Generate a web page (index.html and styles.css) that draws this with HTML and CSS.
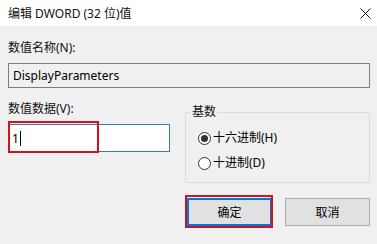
FILE: index.html
```html
<!DOCTYPE html>
<html lang="zh-CN">
<head>
<meta charset="utf-8">
<title>编辑 DWORD (32 位)值</title>
<link rel="stylesheet" href="styles.css">
</head>
<body>
<div class="dialog">
  <div class="titlebar">
    <span class="title">编辑 DWORD (32 位)值</span>
    <svg class="close" width="11" height="11" viewBox="0 0 11 11"><path d="M0.5 0.5 L10.5 10.5 M10.5 0.5 L0.5 10.5" stroke="#111" stroke-width="1" fill="none"/></svg>
  </div>
  <div class="content">
    <div class="label">数值名称(N):</div>
    <div class="name-field">DisplayParameters</div>
    <div class="row">
      <div class="left-col">
        <div class="label">数值数据(V):</div>
        <div class="value-wrap">
          <div class="value-field"><span>1</span><span class="caret"></span></div>
          <div class="highlight hl-value"></div>
        </div>
      </div>
      <fieldset class="group">
        <legend>基数</legend>
        <div class="radio-row"><span class="radio checked"></span><span>十六进制(H)</span></div>
        <div class="radio-row second"><span class="radio"></span><span>十进制(D)</span></div>
      </fieldset>
    </div>
    <div class="buttons">
      <div class="btn-wrap">
        <div class="btn default">确定</div>
        <div class="highlight hl-ok"></div>
      </div>
      <div class="btn">取消</div>
    </div>
  </div>
</div>
</body>
</html>
```
FILE: styles.css
```css
html, body {
  margin: 0;
  padding: 0;
}
body {
  font-family: "Noto Sans", "Noto Sans CJK SC", sans-serif;
  font-size: 12px;
  color: #000;
  background: #f0f0f0;
}
.dialog {
  width: 377px;
  height: 244px;
  overflow: hidden;
  background: #f0f0f0;
  display: flex;
  flex-direction: column;
}
.titlebar {
  height: 26px;
  flex: none;
  background: #fff;
  display: flex;
  align-items: center;
  justify-content: space-between;
  padding: 0 6px 0 8px;
}
.title {
  color: #111;
}
.close {
  display: block;
}
.content {
  padding: 14px 7px 0 8px;
}
.label {
  height: 16px;
  line-height: 16px;
  color: #111;
}
.name-field {
  margin-top: 7px;
  height: 25px;
  box-sizing: border-box;
  border: 1px solid #7e7e7e;
  background: #f0f0f0;
  padding-left: 4px;
  line-height: 23px;
}
.row {
  display: flex;
  margin-top: 13px;
}
.left-col {
  width: 162px;
}
.value-wrap {
  position: relative;
  margin-top: 7px;
}
.value-field {
  height: 28px;
  box-sizing: border-box;
  border: 1px solid #3a78b4;
  background: #fff;
  padding-left: 3px;
  display: flex;
  align-items: center;
}
.caret {
  width: 1px;
  height: 15px;
  background: #000;
  margin-left: 1px;
}
.highlight {
  position: absolute;
  border: 2px solid #d4111f;
  box-sizing: border-box;
}
.hl-value {
  left: 0;
  top: -3px;
  width: 91px;
  height: 32px;
}
.group {
  margin: 3px 0 0 auto;
  width: 185px;
  box-sizing: border-box;
  border: 1px solid #dcdcdc;
  border-radius: 2px;
  padding: 10px 0 11px 5px;
}
.group legend {
  padding: 0 1px;
  line-height: 16px;
  color: #111;
}
.radio-row {
  display: flex;
  align-items: center;
  gap: 2px;
  height: 16px;
  line-height: 16px;
  padding-left: 7px;
}
.radio-row.second {
  margin-top: 9px;
}
.radio {
  width: 13px;
  height: 13px;
  box-sizing: border-box;
  border: 1px solid #333;
  border-radius: 50%;
  background: #fff;
  display: flex;
  align-items: center;
  justify-content: center;
}
.radio.checked::after {
  content: "";
  width: 7px;
  height: 7px;
  border-radius: 50%;
  background: #333;
}
.buttons {
  display: flex;
  justify-content: flex-end;
  gap: 13px;
  margin-top: 15px;
}
.btn-wrap {
  position: relative;
}
.btn {
  width: 85px;
  height: 28px;
  box-sizing: border-box;
  border: 1px solid #adadad;
  background: #e1e1e1;
  display: flex;
  align-items: center;
  justify-content: center;
}
.btn.default {
  border: 2px solid #0078d7;
}
.hl-ok {
  left: -2px;
  top: -3px;
  width: 88px;
  height: 33px;
}
```
